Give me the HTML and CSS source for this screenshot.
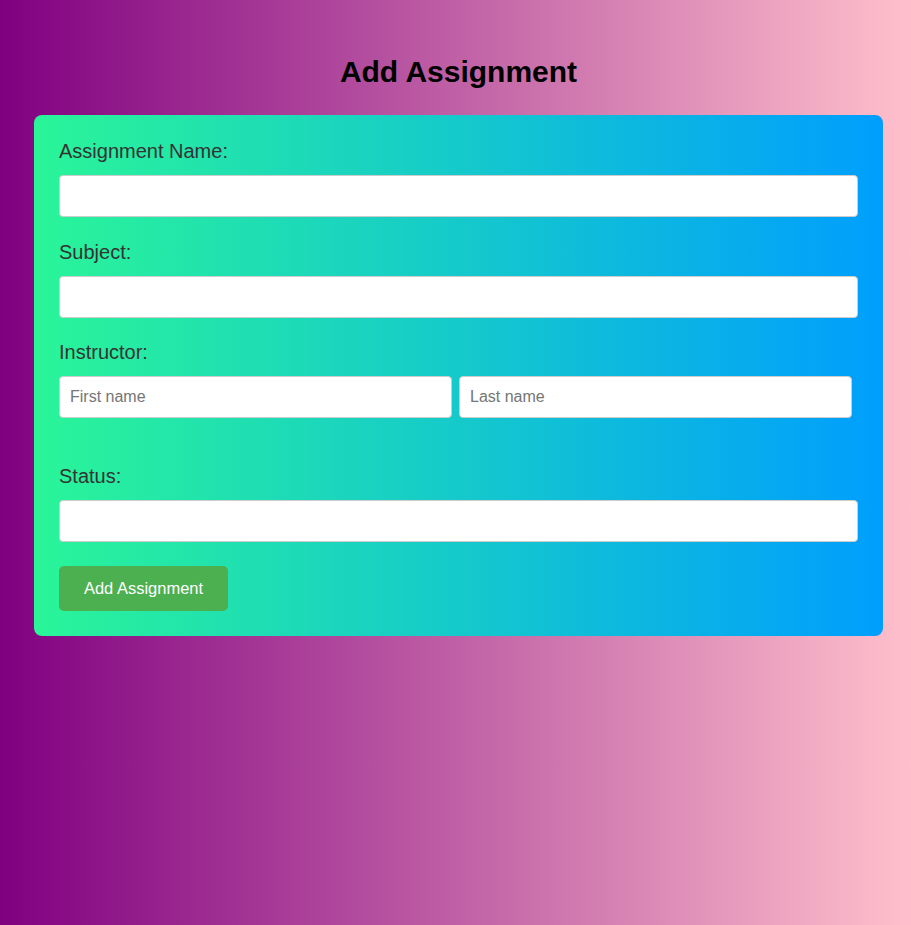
FILE: index.html
```html
<!DOCTYPE html>
<html lang="en">
<head>
<meta charset="utf-8">
<title>Add Assignment</title>
<link rel="stylesheet" href="styles.css">
</head>
<body>
<div class="page">
  <h1 class="title">Add Assignment</h1>
  <form class="card">
    <label class="label">Assignment Name:</label>
    <input class="field" type="text">
    <label class="label">Subject:</label>
    <input class="field" type="text">
    <label class="label">Instructor:</label>
    <div class="row">
      <input class="field half" type="text" placeholder="First name">
      <input class="field half" type="text" placeholder="Last name">
    </div>
    <label class="label status">Status:</label>
    <input class="field" type="text">
    <button class="btn" type="button">Add Assignment</button>
  </form>
</div>
</body>
</html>
```

FILE: styles.css
```css
html, body {
  margin: 0;
  padding: 0;
  min-height: 100%;
  height: 100%;
}
body {
  background: linear-gradient(to right, #800080, #ffc0cb);
  font-family: "Liberation Sans", Arial, sans-serif;
}
.page {
  padding: 0 28px 0 34px;
  width: 849px;
}
.title {
  margin: 0;
  padding-top: 54px;
  height: 61px;
  box-sizing: content-box;
  font-size: 30px;
  line-height: 35px;
  font-weight: bold;
  color: #000;
  text-align: center;
}
.card {
  display: flex;
  flex-direction: column;
  align-items: flex-start;
  padding: 25px;
  border-radius: 8px;
  background: linear-gradient(to right, #2af598 0%, #009efd 100%);
}
.label {
  display: block;
  font-size: 20px;
  line-height: 23px;
  color: #333;
  margin-bottom: 12px;
}
.field {
  box-sizing: border-box;
  width: 799px;
  height: 42px;
  padding: 0 10px;
  border: 1px solid #ccc;
  border-radius: 4px;
  background: #fff;
  font-family: "Liberation Sans", Arial, sans-serif;
  font-size: 16px;
  margin: 0 0 23.5px 0;
  outline: none;
}
.field::placeholder {
  color: #757575;
}
.row {
  display: flex;
  gap: 7px;
  margin-bottom: 47px;
}
.half {
  width: 393px;
  margin: 0;
}
.status {
  margin-bottom: 12px;
}
.btn {
  box-sizing: border-box;
  width: 169px;
  height: 45px;
  border: none;
  border-radius: 5px;
  background: #4caf50;
  color: #fff;
  font-family: "Liberation Sans", Arial, sans-serif;
  font-size: 16.5px;
  padding: 0;
  cursor: pointer;
}
```
